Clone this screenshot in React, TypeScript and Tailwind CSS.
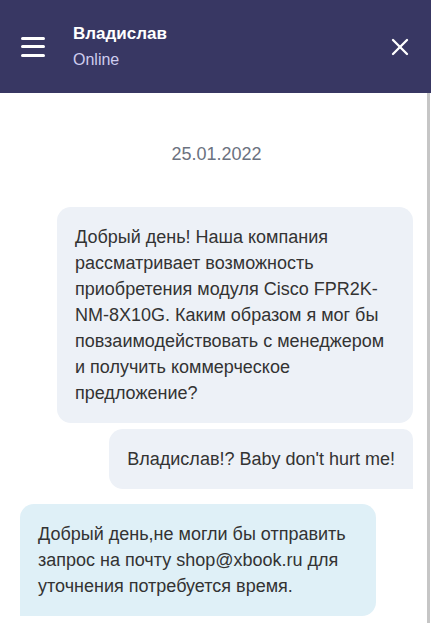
import { X } from 'lucide-react'

type Msg = { id: number; text: string; mine: boolean }

const messages: Msg[] = [
  {
    id: 1,
    mine: true,
    text: 'Добрый день! Наша компания рассматривает возможность приобретения модуля Cisco FPR2K-NM-8X10G. Каким образом я мог бы повзаимодействовать с менеджером и получить коммерческое предложение?',
  },
  { id: 2, mine: true, text: "Владислав!? Baby don't hurt me!" },
  {
    id: 3,
    mine: false,
    text: 'Добрый день,не могли бы отправить запрос на почту shop@xbook.ru для уточнения потребуется время.',
  },
]

export default function App() {
  return (
    <main className="flex h-[623px] w-[431px] flex-col overflow-hidden bg-white font-[family-name:Liberation_Sans,Arial,sans-serif]">
      {/* HEADER */}
      <header className="flex h-[93px] shrink-0 items-center bg-[#383763] pl-[21px] pr-[17px]">
        <div className="flex w-[24px] flex-col gap-[5.5px]">
          <span className="h-[3px] rounded-full bg-white" />
          <span className="h-[3px] rounded-full bg-white" />
          <span className="h-[3px] rounded-full bg-white" />
        </div>
        <div className="ml-[28px] flex flex-1 flex-col">
          <span className="text-[17px] font-bold leading-[20px] text-white">Владислав</span>
          <span className="mt-[6px] text-[16px] leading-[20px] text-[#cfcdef]">Online</span>
        </div>
        <X className="h-[28px] w-[28px] text-white" strokeWidth={2} />
      </header>

      <div className="flex flex-1">
        {/* MESSAGES */}
        <section className="flex flex-1 flex-col pl-5 pr-[14px]">
          <p className="mt-[51px] text-center text-[18px] leading-[20px] text-[#6b7280]">25.01.2022</p>
          <div className="mt-[43px] flex flex-col">
            {messages.map((m) => (
              <div
                key={m.id}
                className={
                  m.id === 1
                    ? 'mb-[6px] max-w-[356px] self-end rounded-[14px] bg-[#edf1f7] px-[18px] py-[17px] text-[18px] leading-[26px] text-[#333]'
                    : m.id === 2
                      ? 'mb-[15px] self-end rounded-l-[14px] rounded-tr-[10px] bg-[#edf1f7] px-[18px] py-[17px] text-[18px] leading-[26px] text-[#333]'
                      : 'max-w-[356px] self-start rounded-[14px] rounded-bl-none bg-[#dff0f7] px-[18px] py-[17px] text-[18px] leading-[26px] text-[#333]'
                }
              >
                {m.text}
              </div>
            ))}
          </div>
        </section>
        {/* scroll track */}
        <div className="mr-px w-[3px] shrink-0 bg-[#c6c6c6]" />
      </div>
    </main>
  )
}
